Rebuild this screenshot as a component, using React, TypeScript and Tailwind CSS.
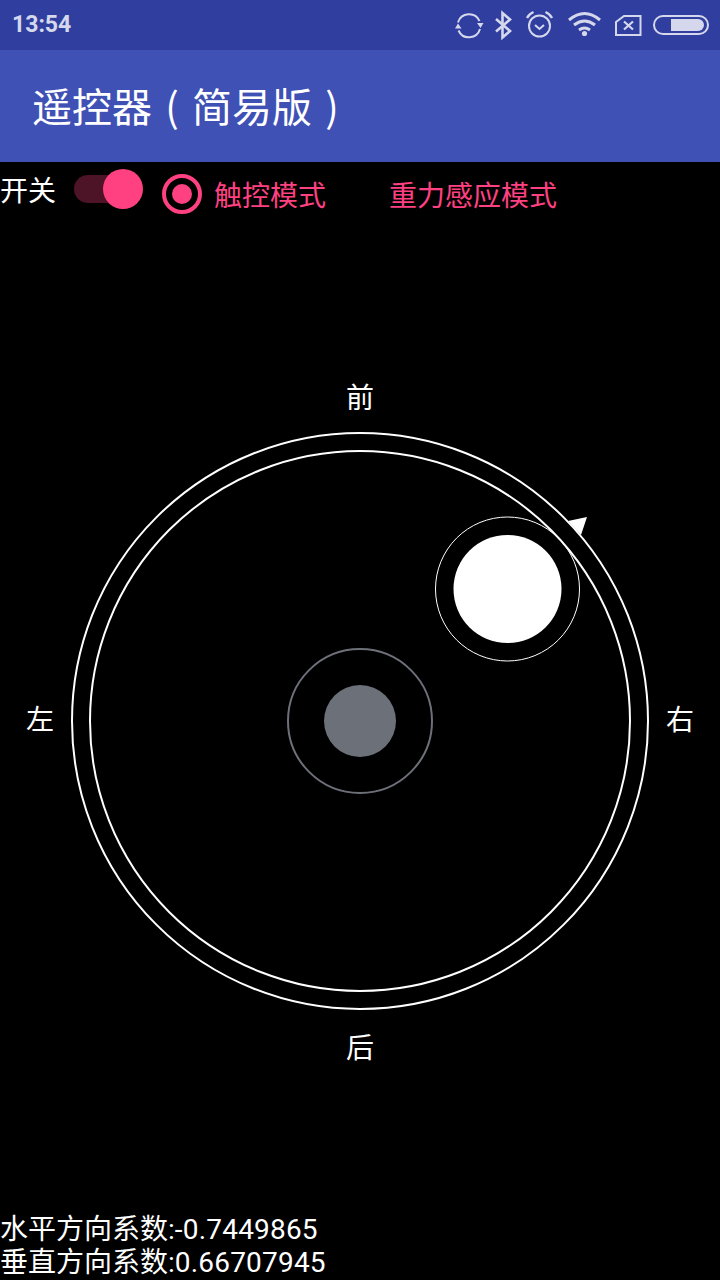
const cjk = "font-['Roboto','Noto_Sans_CJK_SC',sans-serif]";

function StatusIcons() {
  const c = "#d5d8ec";
  return (
    <svg width="270" height="30" viewBox="0 0 270 30" fill="none" stroke={c} className="block">
      {/* sync */}
      <path d="M8 12.500A11.500 11.500 0 0 1 29.500 11M30 19A11.500 11.500 0 0 1 8.500 20.500" strokeWidth="2" />
      <path d="M27 13h6.500l-3 5zM5 18.500h6.500l-3.500-5z" fill={c} stroke="none" />
      {/* bluetooth */}
      <path d="M46 9l14 12-7.500 6.500V3L60 9.500 46 21.500" strokeWidth="2.600" />
      {/* alarm */}
      <circle cx="89.500" cy="16" r="10.500" strokeWidth="2" />
      <path d="M85 15l4.500 4 4.500-4" strokeWidth="2" />
      <path d="M77 8q2-4 6.500-6M102 8q-2-4-6.500-6" strokeWidth="2.400" />
      {/* wifi */}
      <path d="M119 10q15.500-13 31 0M124 15q10.500-8 21 0M129 20q5.500-4 11 0" strokeWidth="3" />
      <circle cx="134.500" cy="23.500" r="2.600" fill={c} stroke="none" />
      {/* no sim */}
      <path d="M166 12l8-6h16.500v19H166z" strokeWidth="2" />
      <path d="M174 11.500l9 8M183 11.500l-9 8" strokeWidth="2.200" />
      {/* battery */}
      <rect x="204" y="6" width="54" height="18" rx="9" strokeWidth="2" />
      <path d="M221 9h27a6 6 0 0 1 0 12h-27z" fill={c} stroke="none" />
    </svg>
  );
}

function Joystick() {
  return (
    <svg width="720" height="991" viewBox="0 222 720 991" fill="none" className="block">
      <circle cx="360" cy="721" r="288" stroke="#fff" strokeWidth="2" />
      <circle cx="360" cy="721" r="270" stroke="#fff" strokeWidth="2" />
      <circle cx="360" cy="721" r="72" stroke="#6d7079" strokeWidth="2" />
      <circle cx="360" cy="721" r="36" fill="#6c7079" />
      <circle cx="507.500" cy="589" r="72" stroke="#fff" strokeWidth="1" />
      <circle cx="507.500" cy="589" r="54" fill="#fff" />
      <path d="M568 521L587 517 581 535z" fill="#fff" />
    </svg>
  );
}

export default function App() {
  return (
    <div className={`flex h-[1280px] w-[720px] flex-col overflow-hidden bg-black text-white ${cjk}`}>
      <div className="flex h-[50px] shrink-0 items-center justify-between bg-[#303f9f] pl-3">
        <span className="text-[23px] font-bold text-[#d5d8ec]">13:54</span>
        <StatusIcons />
      </div>
      <div className="flex h-[112px] shrink-0 items-center bg-[#3f51b5] pl-8 pb-[3px]">
        <h1 className="font-['Noto_Sans_CJK_SC',sans-serif] text-[40px] leading-none font-normal">
          遥控器<span className="inline-block w-10 text-center">(</span>简易版<span className="inline-block w-10 text-center">)</span>
        </h1>
      </div>

      <div className="flex h-[60px] shrink-0 items-center">
        <span className="w-[74px] text-[28px] leading-none">开关</span>
        <div className="relative mb-1.5 h-7 w-[69px]">
          <div className="absolute top-0 left-0 h-7 w-[60px] rounded-full bg-[#4d1327]" />
          <div className="absolute top-[-6px] left-[29px] h-10 w-10 rounded-full bg-[#ff4081]" />
        </div>
        <div className="mt-1 ml-[19px] flex h-10 w-10 items-center justify-center rounded-full border-[4px] border-[#ff4081]">
          <div className="h-5 w-5 rounded-full bg-[#ff4081]" />
        </div>
        <span className="ml-3 pt-2.5 text-[28px] leading-none text-[#ff4081]">触控模式</span>
        <span className="ml-[63px] pt-2.5 text-[28px] leading-none text-[#ff4081]">重力感应模式</span>
      </div>

      <div className="relative min-h-0 flex-1">
        <Joystick />
        <span className="absolute top-[159px] left-[346px] text-[28px] leading-[36px]">前</span>
        <span className="absolute top-[481px] left-[26px] text-[28px] leading-[36px]">左</span>
        <span className="absolute top-[481px] left-[666px] text-[28px] leading-[36px]">右</span>
        <span className="absolute top-[809px] left-[346px] text-[28px] leading-[36px]">后</span>
      </div>

      <div className="shrink-0 pb-px text-[28px] leading-[33px]">
        <p>水平方向系数:<span className="tracking-[0.2px]">-0.7449865</span></p>
        <p>垂直方向系数:<span className="tracking-[0.2px]">0.66707945</span></p>
      </div>
    </div>
  );
}
